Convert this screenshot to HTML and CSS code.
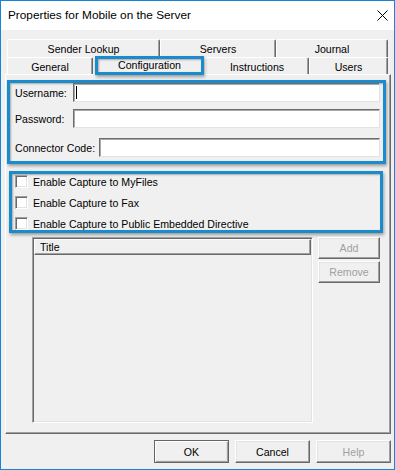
FILE: index.html
```html
<!DOCTYPE html>
<html>
<head>
<meta charset="utf-8">
<link rel="stylesheet" href="styles.css">
</head>
<body>
<div class="window">
  <div class="titlebar">
    <span class="title">Properties for Mobile on the Server</span>
    <svg class="close" width="11" height="11" viewBox="0 0 11 11"><path d="M0.5 0.5 L10.5 10.5 M10.5 0.5 L0.5 10.5" stroke="#000" stroke-width="1" fill="none"/></svg>
  </div>
  <div class="body">
    <div class="tabs">
      <div class="tabrow back">
        <div class="tab t-sender">Sender Lookup</div>
        <div class="tab t-servers">Servers</div>
        <div class="tab t-journal">Journal</div>
      </div>
      <div class="tabrow front">
        <div class="tab t-general">General</div>
        <div class="tab sel">Configuration</div>
        <div class="tab t-instr">Instructions</div>
        <div class="tab t-users">Users</div>
      </div>
    </div>
    <div class="panel">
      <div class="hl creds">
        <div class="field">
          <span class="lbl">Username:</span>
          <div class="inp"><span class="caret"></span></div>
        </div>
        <div class="field">
          <span class="lbl">Password:</span>
          <div class="inp"></div>
        </div>
        <div class="field cc">
          <span class="lbl wide">Connector Code:</span>
          <div class="inp"></div>
        </div>
      </div>
      <div class="hl opts">
        <div class="chk"><span class="cb"></span><span>Enable Capture to MyFiles</span></div>
        <div class="chk"><span class="cb"></span><span>Enable Capture to Fax</span></div>
        <div class="chk"><span class="cb"></span><span>Enable Capture to Public Embedded Directive</span></div>
      </div>
      <div class="listarea">
        <div class="list">
          <div class="listhead">Title</div>
        </div>
        <div class="sidebtns">
          <div class="btn side dis">Add</div>
          <div class="btn side dis">Remove</div>
        </div>
      </div>
    </div>
    <div class="footer">
      <div class="btn foot def">OK</div>
      <div class="btn foot">Cancel</div>
      <div class="btn foot dis">Help</div>
    </div>
  </div>
</div>
</body>
</html>
```
FILE: styles.css
```css
body {
  margin: 0;
}

.window {
  width: 395px;
  height: 470px;
  box-sizing: border-box;
  border: 1px solid #1883d7;
  background: #f0f0f0;
  display: flex;
  flex-direction: column;
  font-family: "Liberation Sans", Arial, sans-serif;
  font-size: 10.6px;
  color: #000;
}

.titlebar {
  flex: none;
  height: 29px;
  box-sizing: border-box;
  background: #fff;
  display: flex;
  align-items: center;
  justify-content: space-between;
  padding: 0 6px 1px 7px;
}

.title {
  font-size: 11.8px;
}

.close {
  display: block;
}

.body {
  flex: 1;
  display: flex;
  flex-direction: column;
  padding-top: 9px;
}

.tabs {
  margin-left: 6px;
  width: 381px;
}

.tabrow {
  display: flex;
  height: 18px;
}

.tabrow.front {
  height: 17px;
}

.tab {
  box-sizing: border-box;
  height: 100%;
  border-left: 1px solid #fff;
  border-top: 1px solid #fff;
  border-right: 1px solid #696969;
  box-shadow: inset -1px 0 #a0a0a0;
  border-radius: 2px 2px 0 0;
  display: flex;
  align-items: center;
  justify-content: center;
  background: #f0f0f0;
  padding-top: 1px;
}

.t-sender { width: 153px; }
.t-servers { width: 116px; }
.t-journal { width: 112px; }
.t-general { width: 86px; }
.t-instr { width: 104px; }
.t-users { width: 79px; }

.tab.sel {
  width: 109px;
  height: 19px;
  margin: -1px 1px 0 2px;
  border: 3px solid #1a8ccc;
  border-radius: 0;
  padding: 0 0 1px 0;
  box-shadow: 1px 2px 3px rgba(0, 0, 0, 0.35), inset 1px 1px 2px rgba(0, 0, 0, 0.3);
  position: relative;
  z-index: 1;
}

.panel {
  margin-left: 4px;
  width: 386px;
  height: 360px;
  box-sizing: border-box;
  border-top: 1px solid #fff;
  border-left: 1px solid #fff;
  border-right: 1px solid #696969;
  border-bottom: 1px solid #696969;
  box-shadow: inset -1px -1px #a0a0a0;
  display: flex;
  flex-direction: column;
  align-items: flex-start;
}

.hl {
  box-sizing: border-box;
  border: 3px solid #1a8ccc;
  box-shadow: 1px 2px 3px rgba(0, 0, 0, 0.35), inset 1px 1px 2px rgba(0, 0, 0, 0.3);
}

.creds {
  margin: 5px 0 0 1px;
  width: 379px;
  height: 84px;
  padding: 0 3px 0 5px;
}

.field {
  display: flex;
  align-items: center;
  height: 19px;
}

.field + .field {
  margin-top: 7px;
}

.field.cc {
  margin-top: 10px;
}

.lbl {
  width: 58px;
  flex: none;
}

.lbl.wide {
  width: 84px;
}

.inp {
  flex: 1;
  height: 19px;
  box-sizing: border-box;
  background: #fff;
  border: 1px solid;
  border-color: #6d6d6d #e3e3e3 #e3e3e3 #6d6d6d;
  box-shadow: inset 1px 1px #a8a8a8;
  display: flex;
  align-items: center;
}

.caret {
  width: 1px;
  height: 13px;
  background: #000;
  margin-left: 2px;
}

.opts {
  margin: 7px 0 0 3px;
  width: 374px;
  height: 62px;
  padding: 1px 0 0 3px;
  display: flex;
  flex-direction: column;
  gap: 8px;
}

.chk {
  display: flex;
  align-items: center;
  height: 13px;
  gap: 5px;
}

.cb {
  width: 13px;
  height: 13px;
  box-sizing: border-box;
  background: #fff;
  border: 1px solid;
  border-color: #a0a0a0 #fff #fff #a0a0a0;
  box-shadow: inset 1px 1px #696969, inset -1px -1px #e3e3e3;
  flex: none;
}

.listarea {
  display: flex;
  gap: 5px;
  margin: 4px 0 0 26px;
}

.list {
  width: 281px;
  height: 186px;
  box-sizing: border-box;
  border: 1px solid;
  border-color: #a0a0a0 #fff #fff #a0a0a0;
  box-shadow: inset 1px 1px #696969, inset -1px -1px #e3e3e3;
  padding: 1px;
  background: #f0f0f0;
}

.listhead {
  height: 16px;
  box-sizing: border-box;
  border-top: 1px solid #fff;
  border-left: 1px solid #fff;
  border-right: 1px solid #696969;
  border-bottom: 1px solid #696969;
  box-shadow: inset -1px -1px #a0a0a0;
  padding-left: 5px;
  display: flex;
  align-items: center;
}

.sidebtns {
  display: flex;
  flex-direction: column;
  gap: 2px;
}

.btn {
  box-sizing: border-box;
  background: #f0f0f0;
  border: 1px solid;
  border-color: #fff #696969 #696969 #fff;
  box-shadow: inset -1px -1px #a0a0a0, inset 1px 1px #e3e3e3;
  display: flex;
  align-items: center;
  justify-content: center;
}

.btn.side {
  width: 62px;
  height: 22px;
}

.btn.dis {
  color: #a0a0a0;
}

.footer {
  display: flex;
  justify-content: flex-end;
  gap: 6px;
  margin-top: 6px;
  padding-right: 3px;
}

.btn.foot {
  width: 75px;
  height: 23px;
}

.btn.def {
  border-color: #646464;
  box-shadow: inset 1px 1px #fff, inset -1px -1px #a0a0a0, inset -2px -2px #e3e3e3;
}
```
